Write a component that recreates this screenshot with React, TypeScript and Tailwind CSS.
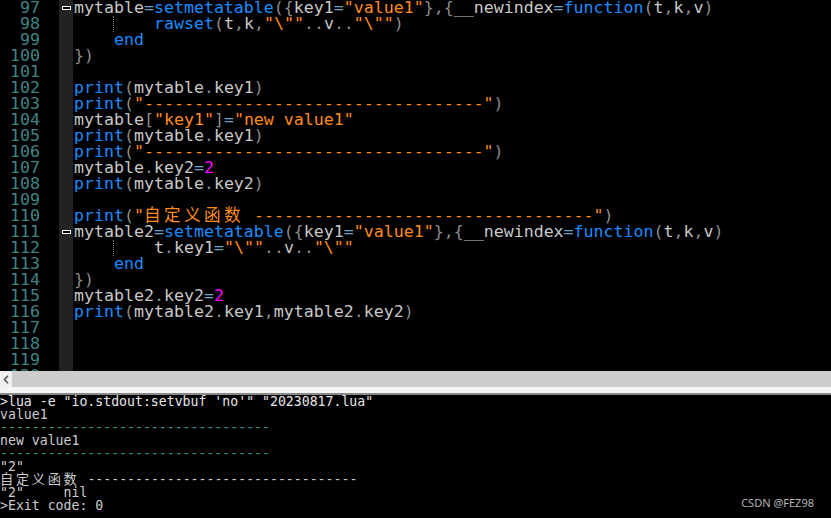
import React from 'react';

type Tok = [string, string];

const cls: Record<string, string> = {
   i: 'text-[#c8c8c8]',
   k: 'text-[#1a8cff]',
   s: 'text-[#ff8c1a]',
   n: 'text-[#ff00ff]',
   o: 'text-[#6fa4cc]',
   p: 'text-[#8c8c8c]',
};

const dashes = '-'.repeat(34);

const printKey = (t: string, k: string): Tok[] => [
   ['print', 'k'], ['(', 'p'], [t, 'i'], ['.', 'p'], [k, 'i'], [')', 'p'],
];
const printDash: Tok[] = [['print', 'k'], ['(', 'p'], [`"${dashes}"`, 's'], [')', 'p']];
const meta = (name: string): Tok[] => [
   [name, 'i'], ['=', 'o'], ['setmetatable', 'k'], ['({', 'p'], ['key1', 'i'], ['=', 'o'],
   ['"value1"', 's'], ['},{', 'p'], ['__newindex', 'i'], ['=', 'o'], ['function', 'k'],
   ['(', 'p'], ['t', 'i'], [',', 'p'], ['k', 'i'], [',', 'p'], ['v', 'i'], [')', 'p'],
];

type Line = { no: number; toks: Tok[]; guide?: boolean; fold?: boolean; cjk?: boolean };

const lines: Line[] = [
   { no: 97, toks: meta('mytable'), fold: true },
   {
      no: 98, guide: true,
      toks: [['rawset', 'k'], ['(', 'p'], ['t', 'i'], [',', 'p'], ['k', 'i'], [',', 'p'],
         ['"\\""', 's'], ['..', 'p'], ['v', 'i'], ['..', 'p'], ['"\\""', 's'], [')', 'p']],
   },
   { no: 99, toks: [['    ', 'i'], ['end', 'k']] },
   { no: 100, toks: [['})', 'p']] },
   { no: 101, toks: [] },
   { no: 102, toks: printKey('mytable', 'key1') },
   { no: 103, toks: printDash },
   { no: 104, toks: [['mytable', 'i'], ['[', 'p'], ['"key1"', 's'], [']', 'p'], ['=', 'o'], ['"new value1"', 's']] },
   { no: 105, toks: printKey('mytable', 'key1') },
   { no: 106, toks: printDash },
   { no: 107, toks: [['mytable', 'i'], ['.', 'p'], ['key2', 'i'], ['=', 'o'], ['2', 'n']] },
   { no: 108, toks: printKey('mytable', 'key2') },
   { no: 109, toks: [] },
   { no: 110, toks: [], cjk: true },
   { no: 111, toks: meta('mytable2'), fold: true },
   {
      no: 112, guide: true,
      toks: [['t', 'i'], ['.', 'p'], ['key1', 'i'], ['=', 'o'], ['"\\""', 's'], ['..', 'p'],
         ['v', 'i'], ['..', 'p'], ['"\\""', 's']],
   },
   { no: 113, toks: [['    ', 'i'], ['end', 'k']] },
   { no: 114, toks: [['})', 'p']] },
   { no: 115, toks: [['mytable2', 'i'], ['.', 'p'], ['key2', 'i'], ['=', 'o'], ['2', 'n']] },
   {
      no: 116,
      toks: [['print', 'k'], ['(', 'p'], ['mytable2', 'i'], ['.', 'p'], ['key1', 'i'], [',', 'p'],
         ['mytable2', 'i'], ['.', 'p'], ['key2', 'i'], [')', 'p']],
   },
   { no: 117, toks: [] },
   { no: 118, toks: [] },
   { no: 119, toks: [] },
   { no: 120, toks: [] },
];

const output: { text: string; color: string; cjk?: boolean }[] = [
   { text: `>lua -e "io.stdout:setvbuf 'no'" "20230817.lua"`, color: 'text-[#e6e6e6]' },
   { text: 'value1', color: 'text-[#cccccc]' },
   { text: dashes, color: 'text-[#2a9a9a]' },
   { text: 'new value1', color: 'text-[#cccccc]' },
   { text: dashes, color: 'text-[#2a9a9a]' },
   { text: '"2"', color: 'text-[#cccccc]' },
   { text: ' ' + dashes, color: 'text-[#cccccc]', cjk: true },
   { text: '"2"     nil', color: 'text-[#cccccc]' },
   { text: '>Exit code: 0', color: 'text-[#cccccc]' },
];

const mono = 'font-["DejaVu_Sans_Mono","Noto_Sans_CJK_SC",monospace]';

const App: React.FC = () => {
   return (
      <div className="w-[831px] h-[518px] bg-black overflow-hidden flex flex-col">
         {/* editor */}
         <div className={`h-[371px] overflow-hidden flex flex-col ${mono} text-[16.6px] leading-[16px]`}>
            {lines.map((line) => (
               <div key={line.no} className="flex h-[16px] shrink-0">
                  <div className="w-[40px] text-right text-[#3f8585]">{line.no}</div>
                  <div className="w-[19px]" />
                  <div className="w-[14px] bg-[#222222] flex items-center justify-center">
                     {line.fold && <div className="w-[9px] h-[4px] border border-white bg-black" />}
                  </div>
                  <div className="pl-[1px] whitespace-pre">
                     {line.guide && (
                        <span className="inline-block w-[40px] h-[16px] align-top border-r border-dotted border-[#7a7a7a]" />
                     )}
                     {line.guide && <span>{'    '}</span>}
                     {line.cjk ? (
                        <>
                           <span className={cls.k}>print</span>
                           <span className={cls.p}>(</span>
                           <span className={cls.s}>"</span>
                           <span className={`${cls.s} tracking-[3.4px]`}>自定义函数</span>
                           <span className={cls.s}>{` ${dashes}"`}</span>
                           <span className={cls.p}>)</span>
                        </>
                     ) : (
                        line.toks.map(([t, c], idx) => (
                           <span key={idx} className={cls[c]}>{t}</span>
                        ))
                     )}
                  </div>
               </div>
            ))}
         </div>

         {/* horizontal scrollbar */}
         <div className="h-[16px] flex shrink-0">
            <div className="w-[12px] bg-[#f0f0f0] flex items-center justify-center">
               <svg width="6" height="9" viewBox="0 0 6 9">
                  <path d="M5 0.8 L1.5 4.5 L5 8.2" fill="none" stroke="#555" strokeWidth="1.6" />
               </svg>
            </div>
            <div className="flex-1 bg-[#cdcdcd]" />
         </div>
         <div className="h-[6px] bg-[#f4f4f4] shrink-0" />
         <div className="h-[2px] bg-[#8a8a8a] shrink-0" />

         {/* output pane */}
         <div className={`relative flex-1 overflow-hidden ${mono} text-[13.2px] leading-[13px]`}>
            {output.map((l, idx) => (
               <div key={idx} className={`h-[13px] whitespace-pre ${l.color}`}>
                  {l.cjk && <span className="tracking-[2.7px]">自定义函数</span>}
                  {l.text}
               </div>
            ))}
            <div className="absolute right-[17px] bottom-[9px] text-[11px] text-[#b4b4b4] font-['Noto_Sans',sans-serif]">
               CSDN @FEZ98
            </div>
         </div>
      </div>
   );
};

export default App;
